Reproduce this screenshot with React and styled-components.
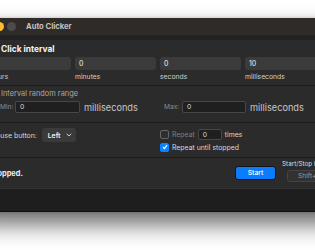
import React from "react";
import styled, { createGlobalStyle } from "styled-components";

const Global = createGlobalStyle`
  html, body { margin: 0; padding: 0; background: #ffffff; }
  body { width: 315px; height: 250px; overflow: hidden; font-family: Inter, "Noto Sans", sans-serif; }
  #root { width: 315px; height: 250px; }
`;

const Page = styled.div`
  padding-top: 18px;
  width: 315px;
  height: 250px;
  box-sizing: border-box;
  overflow: hidden;
  background: #fff;
`;

const Window = styled.div`
  margin-left: -24px;
  width: 380px;
  background: #2b2b2b;
  border-bottom: 1px solid #0e0e0e;
  box-shadow: 0 12px 22px rgba(0, 0, 0, 0.6), 0 0 3px rgba(0, 0, 0, 0.2);
  color: #dcdcdc;
`;

const TitleBar = styled.div`
  height: 17px;
  display: flex;
  align-items: center;
  gap: 3px;
  padding-left: 7px;
  background: #2e2b29;
`;

const Light = styled.span`
  width: 9px;
  height: 9px;
  border-radius: 50%;
  background: ${(p) => p.$c};
`;

const Title = styled.span`
  margin-left: 7px;
  font-size: 7.6px;
  font-weight: 700;
  color: #c4c4c4;
`;

const Band = styled.div`
  height: 5px;
  background: #222222;
`;

const Section = styled.div`
  padding: ${(p) => p.$pad};
  padding-left: 14px;
  padding-right: 14px;
  border-bottom: 1px solid #1c1c1c;
`;

const Heading = styled.div`
  padding-left: 11px;
  font-size: ${(p) => (p.$sub ? "7.4px" : "8.4px")};
  font-weight: ${(p) => (p.$sub ? 400 : 700)};
  color: ${(p) => (p.$sub ? "#a9a9a9" : "#f4f4f4")};
  line-height: 10px;
  height: 10px;
`;

const FieldGrid = styled.div`
  margin-top: 3px;
  display: grid;
  grid-template-columns: repeat(4, 81px);
  column-gap: 4px;
`;

const Field = styled.div`
  display: flex;
  flex-direction: column;
  gap: 2px;
`;

const NumBox = styled.div`
  height: 13px;
  border-radius: 3px;
  background: #3b3b3b;
  box-sizing: border-box;
  padding-left: 4px;
  font-size: 7px;
  line-height: 13px;
  color: #f0f0f0;
`;

const FieldLabel = styled.div`
  font-size: 6.8px;
  line-height: 9px;
  color: #cfcfcf;
`;

const TwoCols = styled.div`
  display: grid;
  grid-template-columns: 166px 166px;
  column-gap: 4px;
  margin-top: ${(p) => p.$mt || "0px"};
`;

const RangeRow = styled.div`
  display: flex;
  align-items: center;
  height: 12px;
  padding-left: ${(p) => p.$pl};
  gap: 4px;
`;

const SmallLabel = styled.span`
  font-size: 6.6px;
  color: #8c8c8c;
  width: ${(p) => p.$w};
`;

const DarkInput = styled.div`
  width: ${(p) => p.$w};
  height: ${(p) => p.$h || "12px"};
  box-sizing: border-box;
  border: 1px solid #474747;
  border-radius: 2px;
  background: #1f1f1f;
  padding-left: 4px;
  font-size: 6.8px;
  line-height: ${(p) => (p.$h ? `calc(${p.$h} - 2px)` : "10px")};
  color: #d8d8d8;
`;

const BigUnit = styled.span`
  font-size: 9.2px;
  color: #c6c6c6;
`;

const LeftOpt = styled.div`
  display: flex;
  align-items: center;
  gap: 5px;
  height: 14px;
`;

const OptLabel = styled.span`
  font-size: 6.9px;
  color: ${(p) => (p.$dim ? "#7f7f7f" : "#d6d6d6")};
`;

const SelectBox = styled.div`
  width: 34px;
  height: 14px;
  box-sizing: border-box;
  border-radius: 3px;
  background: #3a3a3a;
  display: flex;
  align-items: center;
  justify-content: space-between;
  padding: 0 4px 0 6px;
  font-size: 6.8px;
  font-weight: 600;
  color: #f2f2f2;
`;

const RightOpts = styled.div`
  display: flex;
  flex-direction: column;
  gap: 2px;
`;

const CheckRow = styled.div`
  display: flex;
  align-items: center;
  height: ${(p) => p.$h};
  gap: 3px;
`;

const Box = styled.span`
  width: 9px;
  height: 9px;
  box-sizing: border-box;
  border-radius: 2px;
  display: flex;
  align-items: center;
  justify-content: center;
  background: ${(p) => (p.$on ? "#0a84ff" : "#2e2e2e")};
  border: 1px solid ${(p) => (p.$on ? "#0a84ff" : "#666666")};
`;

const Footer = styled.div`
  height: 30px;
  display: flex;
  align-items: center;
  padding: 0 14px;
`;

const Status = styled.span`
  flex: 0 0 245px;
  font-size: 7.4px;
  font-weight: 700;
  color: #ececec;
`;

const StartButton = styled.button`
  width: 41px;
  height: 14px;
  padding: 0;
  border: 1px solid #141414;
  border-radius: 3px;
  background: #0b7cfe;
  color: #fff;
  font-family: inherit;
  font-size: 6.8px;
  font-weight: 500;
  line-height: 12px;
`;

const Hotkey = styled.div`
  margin-left: 6px;
  display: flex;
  flex-direction: column;
  gap: 2px;
  margin-top: -4px;
`;

const HotkeyLabel = styled.span`
  font-size: 6.3px;
  line-height: 8px;
  color: #dedede;
  white-space: nowrap;
`;

const HotkeyBox = styled.div`
  margin-left: 5px;
  width: 42px;
  height: 12px;
  box-sizing: border-box;
  border: 1px solid #444;
  border-radius: 3px;
  background: #323232;
  font-size: 6.6px;
  line-height: 10px;
  color: #9a9a9a;
  padding-left: 10px;
  white-space: nowrap;
`;

const BottomBand = styled.div`
  height: 22px;
  background: #1e1e1e;
  border-top: 1px solid #333;
`;

const Chevron = () => (
  <svg width="6" height="4" viewBox="0 0 6 4">
    <polyline points="0.7,0.8 3,3 5.3,0.8" fill="none" stroke="#d0d0d0" strokeWidth="1" />
  </svg>
);

const Check = () => (
  <svg width="6" height="6" viewBox="0 0 6 6">
    <polyline points="1,3.2 2.4,4.6 5,1.2" fill="none" stroke="#fff" strokeWidth="1.2" />
  </svg>
);

export default function App() {
  const fields = [
    ["0", "hours"],
    ["0", "minutes"],
    ["0", "seconds"],
    ["10", "milliseconds"],
  ];
  return (
    <Page>
      <Global />
      <Window>
        <TitleBar>
          <Light $c="#ff5f57" />
          <Light $c="#febc2e" />
          <Light $c="#4b4b4b" />
          <Title>Auto Clicker</Title>
        </TitleBar>
        <Band />
        <Section $pad="4px 0 4px">
          <Heading>Click interval</Heading>
          <FieldGrid>
            {fields.map(([v, l]) => (
              <Field key={l}>
                <NumBox>{v}</NumBox>
                <FieldLabel>{l}</FieldLabel>
              </Field>
            ))}
          </FieldGrid>
        </Section>
        <Section $pad="3px 0 9px">
          <Heading $sub>Interval random range</Heading>
          <TwoCols $mt="2px">
            <RangeRow $pl="10px">
              <SmallLabel $w="11px">Min:</SmallLabel>
              <DarkInput $w="65px">0</DarkInput>
              <BigUnit>milliseconds</BigUnit>
            </RangeRow>
            <RangeRow $pl="4px">
              <SmallLabel $w="14px">Max:</SmallLabel>
              <DarkInput $w="64px">0</DarkInput>
              <BigUnit>milliseconds</BigUnit>
            </RangeRow>
          </TwoCols>
        </Section>
        <Section $pad="5px 0 5px">
          <TwoCols>
            <LeftOpt>
              <OptLabel>Mouse button:</OptLabel>
              <SelectBox>
                Left
                <Chevron />
              </SelectBox>
            </LeftOpt>
            <RightOpts>
              <CheckRow $h="12px">
                <Box />
                <OptLabel $dim>Repeat</OptLabel>
                <DarkInput $w="24px" $h="11px">0</DarkInput>
                <OptLabel>times</OptLabel>
              </CheckRow>
              <CheckRow $h="10px">
                <Box $on>
                  <Check />
                </Box>
                <OptLabel>Repeat until stopped</OptLabel>
              </CheckRow>
            </RightOpts>
          </TwoCols>
        </Section>
        <Footer>
          <Status>Stopped.</Status>
          <StartButton>Start</StartButton>
          <Hotkey>
            <HotkeyLabel>Start/Stop hotkey</HotkeyLabel>
            <HotkeyBox>Shift+Cmd+S</HotkeyBox>
          </Hotkey>
        </Footer>
        <BottomBand />
      </Window>
    </Page>
  );
}
